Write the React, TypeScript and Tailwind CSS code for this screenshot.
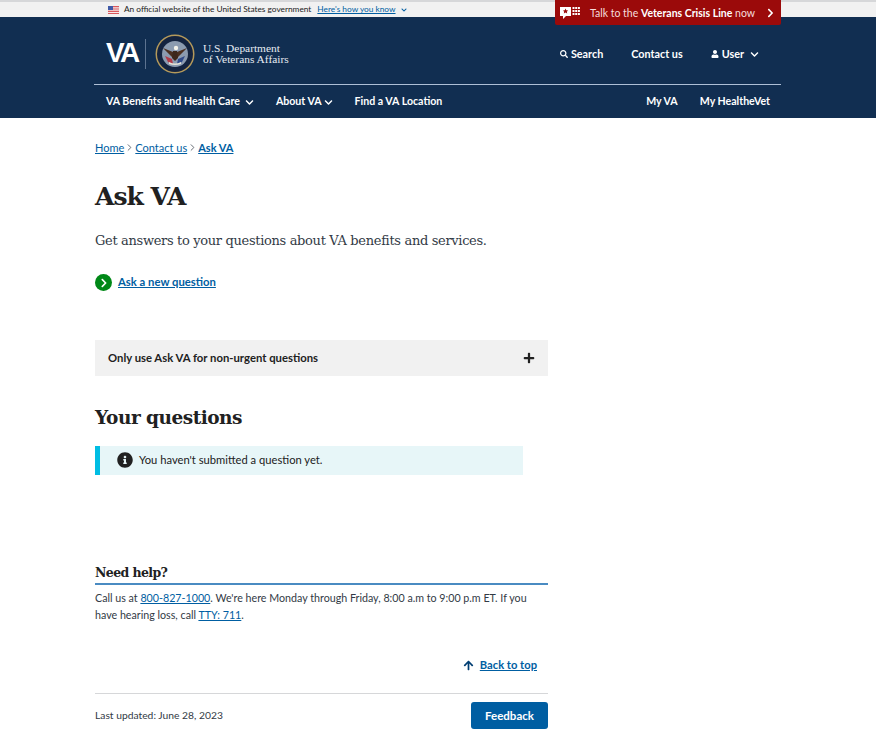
import { FaChevronDown, FaChevronRight, FaSearch, FaUser, FaPlus, FaInfoCircle, FaArrowUp } from "react-icons/fa";
import { ChevronRight } from "lucide-react";

const sans = "font-['Lato','Noto_Sans',sans-serif]";
const slab = "font-['DejaVu_Serif',serif]";

const Seal = () => (
	<svg width="40" height="40" viewBox="0 0 40 40">
		<circle cx="20" cy="20" r="19.5" fill="#b59a5b" />
		<circle cx="20" cy="20" r="18" fill="#14233f" />
		<circle cx="20" cy="20" r="13" fill="#8c9bb0" />
		<path d="M8 14l10 4v6zM32 14l-10 4v6z" fill="#4b2f20" />
		<circle cx="21" cy="14" r="2.2" fill="#f3f1ea" />
		<path d="M18 17h4l1 7-3 3-3-3z" fill="#3d271b" />
		<path d="M10 22l7 3 1 5-5-2z" fill="#b23a48" />
		<path d="M30 22l-7 3-1 5 5-2z" fill="#2f4a8a" />
		<path d="M14 28q6 3 12 0v2q-6 2-12 0z" fill="#e8e4d8" />
	</svg>
);

const Flag = () => (
	<svg width="11" height="8" viewBox="0 0 11 8">
		<rect width="11" height="8" fill="#f6e9e9" />
		<path d="M0 0h11v1.2H0zM0 2.4h11v1.2H0zM0 4.8h11V6H0zM0 7h11v1H0z" fill="#d8575d" />
		<rect width="5" height="4" fill="#3f5aa8" />
	</svg>
);

const CrisisIcon = () => (
	<svg width="20" height="14" viewBox="0 0 20 14">
		<path d="M0 1h11v9H6l-3 3v-3H0z" fill="#fff" />
		<path d="M5.5 2.6l.8 1.7 1.8.2-1.3 1.2.4 1.8-1.7-.9-1.7.9.4-1.8L3 4.5l1.8-.2z" fill="#9b0a0a" />
		<g fill="#fff">
			<rect x="12.5" y="1" width="2" height="2" />
			<rect x="15.2" y="1" width="2" height="2" />
			<rect x="17.9" y="1" width="2" height="2" />
			<rect x="12.5" y="4" width="2" height="2" />
			<rect x="15.2" y="4" width="2" height="2" />
			<rect x="17.9" y="4" width="2" height="2" />
			<rect x="12.5" y="7" width="2" height="2" />
			<rect x="15.2" y="7" width="2" height="2" />
			<rect x="17.9" y="7" width="2" height="2" />
		</g>
	</svg>
);

const App = () => {
	return (
		<div className={`${sans} w-[876px] h-[754px] overflow-hidden bg-white text-[#212121]`}>
			{/* gov banner */}
			<div className="h-[17px] bg-[#f1f1f1] border-t-2 border-[#d6d7d9] flex items-center ps-[108px] text-[8.3px] relative">
				<Flag />
				<span className="ms-[5px]">An official website of the United States government</span>
				<a className="ms-[6px] text-[#005ea2] underline">Here's how you know</a>
				<FaChevronDown className="ms-[5px] text-[#005ea2] w-[6px] h-[6px]" />
				<div className="absolute left-[555px] top-[-2px] w-[226px] h-[25px] bg-[#9b0a0a] text-white flex items-center ps-[5px] pe-[6px] text-[10.5px] rounded-b-[2px]">
					<CrisisIcon />
					<span className="ms-[10px] mt-[2px] text-[#f6dcdc]">Talk to the <b className="text-white">Veterans Crisis Line</b> now</span>
					<FaChevronRight className="ms-auto w-[9px] h-[10px]" />
				</div>
			</div>

			{/* header */}
			<header className="h-[101px] bg-[#112e51] text-white">
				<div className="w-[687px] ms-[94px]">
					<div className="h-[68px] pt-[6px] flex items-center border-b border-[#aebfd6] ps-[12px]">
						<span className="font-['Liberation_Sans',sans-serif] font-bold text-[28px] tracking-[-2.6px] w-[32px] -mt-[1px]">VA</span>
						<div className="w-px h-[30px] bg-[#5d7390] ms-[7px]"></div>
						<div className="ms-[9px]"><Seal /></div>
						<div className="ms-[8px] font-['Liberation_Serif',serif] text-[11.4px] leading-[11px] text-[#e6ebf2]">
							<div>U.S. Department</div>
							<div>of Veterans Affairs</div>
						</div>
						<div className="ms-auto mt-[1px] flex items-center text-[10.8px] font-bold">
							<FaSearch className="w-[8px] h-[8px]" />
							<span className="ms-[3px]">Search</span>
							<span className="ms-[28px]">Contact us</span>
							<FaUser className="ms-[28px] w-[8px] h-[8px]" />
							<span className="ms-[3px]">User</span>
							<FaChevronDown className="ms-[6px] me-[22px] w-[9px] h-[9px]" />
						</div>
					</div>
					<nav className="h-[32px] pt-[2px] flex items-center ps-[12px] text-[10.6px] font-bold">
						<span>VA Benefits and Health Care</span>
						<FaChevronDown className="ms-[5px] w-[9px] h-[9px]" />
						<span className="ms-[22px]">About VA</span>
						<FaChevronDown className="ms-[2px] w-[9px] h-[9px]" />
						<span className="ms-[22px]">Find a VA Location</span>
						<span className="ms-auto">My VA</span>
						<span className="ms-[22px] me-[11px]">My HealtheVet</span>
					</nav>
				</div>
			</header>

			{/* main */}
			<main className="ms-[95px] w-[453px]">
				<div className="mt-[22px] flex items-center text-[11px] leading-[15px]">
					<a className="text-[#005ea2] underline">Home</a>
					<ChevronRight className="w-[11px] h-[11px] text-[#5b616b]" />
					<a className="text-[#005ea2] underline">Contact us</a>
					<ChevronRight className="w-[11px] h-[11px] text-[#5b616b]" />
					<a className="text-[#005ea2] underline font-bold">Ask VA</a>
				</div>

				<h1 className={`${slab} font-bold text-[25px] tracking-[-1px] leading-[34px] mt-[25px]`}>Ask VA</h1>
				<p className={`${slab} text-[13px] tracking-[-0.33px] leading-[20px] mt-[17px] text-[#323a45]`}>Get answers to your questions about VA benefits and services.</p>

				<div className="flex items-center mt-[23px]">
					<div className="w-[17px] h-[17px] rounded-full bg-[#008817] flex items-center justify-center">
						<FaChevronRight className="w-[10px] h-[10px] text-white" />
					</div>
					<a className="ms-[6px] text-[11.3px] font-bold text-[#005ea2] underline">Ask a new question</a>
				</div>

				<div className="mt-[49px] h-[36px] bg-[#f1f1f1] flex items-center justify-between ps-[13px] pe-[13px] text-[11.3px] font-bold">
					<span>Only use Ask VA for non-urgent questions</span>
					<FaPlus className="w-[12px] h-[12px]" />
				</div>

				<h2 className={`${slab} font-bold text-[18.5px] tracking-[-0.5px] leading-[28px] mt-[28px]`}>Your questions</h2>

				<div className="mt-[14px] w-[428px] h-[29px] bg-[#e7f6f8] border-l-[5px] border-[#00bde3] flex items-center ps-[17px] text-[11.2px]">
					<FaInfoCircle className="w-[16px] h-[16px] -mt-[1px]" />
					<span className="ms-[6px]">You haven't submitted a question yet.</span>
				</div>

				<h3 className={`${slab} font-bold text-[12.5px] tracking-[-0.6px] leading-[18px] mt-[89px]`}>Need help?</h3>
				<div className="h-[2px] bg-[#4a8bc2] mt-[1px]"></div>
				<p className="text-[10.7px] leading-[17px] mt-[4px] text-[#323a45]">
					Call us at <a className="text-[#005ea2] underline">800-827-1000</a>. We're here Monday through Friday, 8:00 a.m to 9:00 p.m ET. If you have hearing loss, call <a className="text-[#005ea2] underline">TTY: 711</a>.
				</p>

				<div className="flex justify-end items-center mt-[34px] pe-[11px] text-[11.2px] font-bold text-[#005ea2]">
					<FaArrowUp className="w-[11px] h-[11px] text-[#003e73]" />
					<a className="ms-[6px] underline">Back to top</a>
				</div>

				<div className="border-t border-[#d6d7d9] mt-[19px] pt-[8px] flex items-center justify-between text-[10.3px] text-[#323a45]">
					<span>Last updated: June 28, 2023</span>
					<button className="w-[77px] h-[27px] bg-[#005ea2] text-white text-[11.5px] font-bold rounded-[3px]">Feedback</button>
				</div>
			</main>
		</div>
	);
};

export default App;
